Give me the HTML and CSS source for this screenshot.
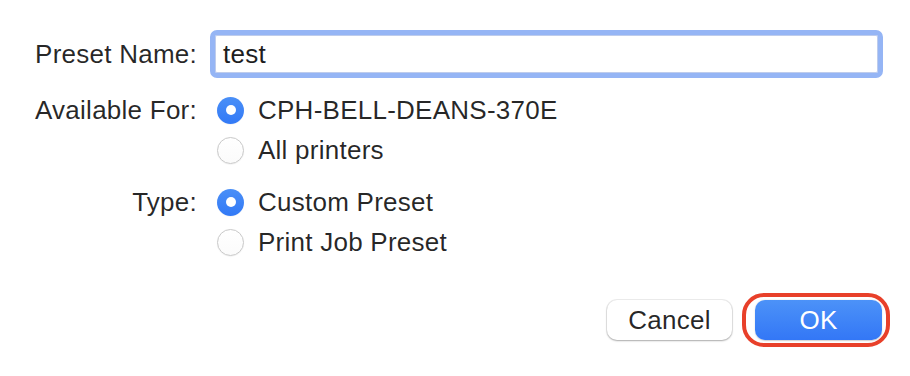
FILE: index.html
```html
<!DOCTYPE html>
<html>
<head>
<meta charset="utf-8">
<link rel="stylesheet" href="styles.css">
</head>
<body>
<div class="dialog">
  <div class="form">
    <div class="label label-field">Preset Name:</div>
    <div class="field"><span class="field-text">test</span></div>

    <div class="label">Available For:</div>
    <div class="options">
      <div class="option"><span class="radio checked"></span><span>CPH-BELL-DEANS-370E</span></div>
      <div class="option"><span class="radio"></span><span>All printers</span></div>
    </div>

    <div class="label">Type:</div>
    <div class="options">
      <div class="option"><span class="radio checked"></span><span>Custom Preset</span></div>
      <div class="option"><span class="radio"></span><span>Print Job Preset</span></div>
    </div>
  </div>
  <div class="footer">
    <div class="btn btn-cancel">Cancel</div>
    <div class="highlight"><div class="btn btn-ok">OK</div></div>
  </div>
</div>
</body>
</html>
```

FILE: styles.css
```css
html, body {
  margin: 0;
  padding: 0;
  background: #ffffff;
}
body {
  width: 910px;
  height: 376px;
  overflow: hidden;
  font-family: "Liberation Sans", Arial, sans-serif;
  font-size: 26px;
  letter-spacing: 0.25px;
  color: rgba(0, 0, 0, 0.85);
}
.dialog {
  padding-top: 30px;
}
.form {
  display: grid;
  grid-template-columns: 197px 1fr;
  column-gap: 13px;
  row-gap: 12px;
  padding-right: 27px;
}
.label {
  text-align: right;
  line-height: 40px;
  height: 40px;
}
.label-field {
  align-self: center;
  line-height: 48px;
  height: 48px;
}
.field {
  height: 48px;
  box-sizing: border-box;
  border: 5px solid #95b5f5;
  border-radius: 7px;
  background: #fff;
  display: flex;
  align-items: center;
  padding-left: 8px;
  box-shadow: inset 0 0 0 1px rgba(70, 110, 200, 0.35);
}
.field-text {
  line-height: 1;
  color: #1e1e1e;
}
.options {
  display: flex;
  flex-direction: column;
}
.option {
  display: flex;
  align-items: center;
  height: 40px;
}
.radio {
  width: 27px;
  height: 27px;
  box-sizing: border-box;
  border-radius: 50%;
  margin-left: 7px;
  margin-right: 14px;
  border: 1px solid #c9c9c9;
  background: linear-gradient(#ffffff, #fbfbfb);
  box-shadow: 0 0.5px 1px rgba(0, 0, 0, 0.08);
  display: flex;
  align-items: center;
  justify-content: center;
}
.radio.checked {
  border: none;
  background: linear-gradient(#4a8ff7, #3279f6);
}
.radio.checked::after {
  content: "";
  width: 10px;
  height: 10px;
  border-radius: 50%;
  background: #fff;
}
.footer {
  display: flex;
  justify-content: flex-end;
  align-items: center;
  margin-top: 31px;
  padding-right: 20px;
}
.btn {
  height: 40px;
  box-sizing: border-box;
  display: flex;
  align-items: center;
  justify-content: center;
  border-radius: 10px;
}
.btn-cancel {
  width: 125px;
  margin-right: 10px;
  background: #fff;
  box-shadow: 0 0 0 1px rgba(0, 0, 0, 0.07), 0 1px 2px rgba(0, 0, 0, 0.28);
  color: rgba(0, 0, 0, 0.85);
}
.highlight {
  border: 4px solid #e8402a;
  border-radius: 22px;
  padding: 3px 4px 3px 9px;
}
.btn-ok {
  width: 127px;
  background: linear-gradient(#4c92f8, #3377f6);
  color: #fff;
  box-shadow: 0 0.5px 1.5px rgba(0, 0, 0, 0.2);
}
```
